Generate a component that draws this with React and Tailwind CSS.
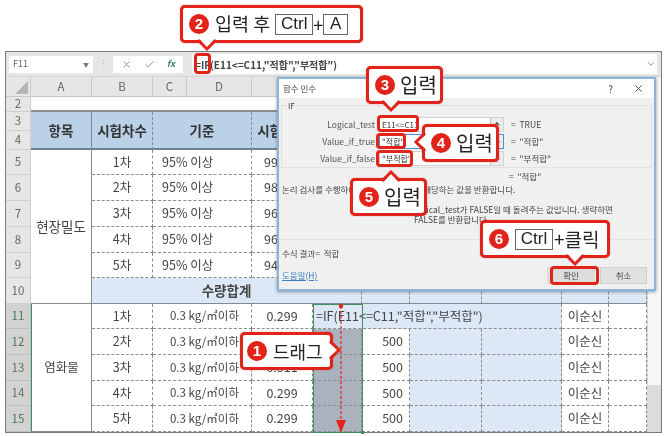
import React from 'react';
import { X, Check, ChevronDown, ArrowUp } from 'lucide-react';

const krFont = "font-['Noto_Sans_CJK_KR','Noto_Sans',sans-serif]";
const dash = 'border-r border-b border-dashed border-[#8c8c8c]';
const cell = `flex items-center justify-center text-[12.5px] text-[#444] ${dash}`;
const hdrCell = 'flex items-center justify-center bg-[#bad1e8] text-[13.5px] font-bold text-[#333] row-span-2 border-b-2 border-b-[#6f7f8c] [border-bottom-style:solid] border-r border-r-[#7d8b96] border-dashed';
const rowHdr = 'flex items-center justify-center text-[11.5px] text-[#666] bg-[#e6e6e6] border-b border-r border-[#cfcfcf]';
const rowHdrOn = 'flex items-center justify-center text-[11.5px] text-[#4f7460] bg-[#d2d2d2] border-b border-r border-[#bdbdbd]';
const colHdr = 'flex items-center justify-center text-[11.5px] text-[#666] bg-[#e6e6e6] border-r border-b border-[#c9c9c9]';
const blue = 'bg-[#dce8f5]';

const density = ['99.5%', '98.2%', '96.4%', '96.1%', '94.8%'];
const chloride = ['0.299', '0.299', '0.311', '0.299', '0.299'];

const Badge = ({ n }) => (
  <span className="w-[20px] h-[20px] rounded-full bg-[#e2231a] text-white text-[15px] font-bold flex items-center justify-center font-['Liberation_Sans',sans-serif] shrink-0">
    {n}
  </span>
);

const Key = ({ children, className }) => (
  <span className={`h-[21px] border border-[#666] flex items-center justify-center text-[17px] text-[#222] font-['Liberation_Sans',sans-serif] ${className}`}>
    {children}
  </span>
);

const Callout = ({ className, tail, children }) => (
  <div className={`absolute box-border border-[3px] border-[#e2231a] rounded-[5px] bg-white flex items-center text-[#222] shadow-[0_0_1px_#e2231a] ${className}`}>
    {children}
    {tail}
  </div>
);

const TailDown = ({ className }) => (
  <svg className={`absolute top-full overflow-visible ${className}`} width="18" height="11" viewBox="0 0 18 11">
    <polygon points="0,-3 9,8 18,-3" fill="white" />
    <polyline points="0,0 9,9 18,0" fill="none" stroke="#e2231a" strokeWidth="3" />
  </svg>
);

const TailUp = ({ className }) => (
  <svg className={`absolute bottom-full overflow-visible ${className}`} width="18" height="11" viewBox="0 0 18 11">
    <polygon points="0,14 9,3 18,14" fill="white" />
    <polyline points="0,11 9,2 18,11" fill="none" stroke="#e2231a" strokeWidth="3" />
  </svg>
);

const TailSide = ({ className, left }) => (
  <svg className={`absolute overflow-visible ${className}`} width="11" height="18" viewBox="0 0 11 18">
    {left ? (
      <>
        <polygon points="14,0 3,9 14,18" fill="white" />
        <polyline points="11,0 2,9 11,18" fill="none" stroke="#e2231a" strokeWidth="3" />
      </>
    ) : (
      <>
        <polygon points="-3,0 8,9 -3,18" fill="white" />
        <polyline points="0,0 9,9 0,18" fill="none" stroke="#e2231a" strokeWidth="3" />
      </>
    )}
  </svg>
);

const Mark = ({ className }) => (
  <div className={`absolute box-border border-[3px] border-[#e2231a] rounded-[4px] ${className}`} />
);

const FormulaBar = () => (
  <div className="h-[25px] bg-[#e6e6e6] flex items-center border-b border-[#d5d5d5] pl-[3px] pr-[4px]">
    <div className="w-[84px] h-[17px] bg-white flex items-center justify-between px-[4px] text-[9px] text-[#666]">
      <span>F11</span>
      <span className="text-[6px] text-[#777]">▼</span>
    </div>
    <div className="w-[20px] text-center text-[9px] text-[#bbb]">⋮</div>
    <div className="w-[70px] h-[17px] bg-white flex items-center justify-around px-[2px]">
      <X size={11} className="text-[#888]" />
      <Check size={11} className="text-[#888]" />
      <span className="text-[9px] italic font-bold text-[#3f8f5f]">fx</span>
    </div>
    <div className="w-[9px]" />
    <div className="flex-1 h-[20px] bg-white flex items-center justify-between pl-[3px] pr-[1px] text-[10px] font-bold text-[#444]">
      <span>=IF(E11&lt;=C11,"적합","부적합")</span>
      <ChevronDown size={10} className="text-[#777]" />
    </div>
  </div>
);

const Sheet = () => (
  <div className="grid grid-cols-[25px_61px_61px_34px_65px_61px_49px_48px_72px_80px_47px_38px] grid-rows-[20px_15px_19px_19px_25px_26px_26px_26px_25px_26px_25px_26px_26px_25px_26px]">
    <div className={`${colHdr} relative`}>
      <div className="absolute right-[2px] bottom-[2px] w-0 h-0 border-l-[13px] border-l-transparent border-b-[13px] border-b-[#b5b5b5]" />
    </div>
    {['A', 'B', 'C', 'D', 'E', 'F', 'G', 'H', 'I', 'J', 'K'].map((c) => (
      <div key={c} className={colHdr}>{c}</div>
    ))}

    <div className={rowHdr}>2</div>
    <div className="col-span-11 bg-white border-b-2 border-[#8c8c8c]" />

    <div className={rowHdr}>3</div>
    <div className={`${hdrCell} [border-right-style:solid]`}>항목</div>
    <div className={hdrCell}>시험차수</div>
    <div className={`${hdrCell} col-span-2`}>기준</div>
    <div className={hdrCell}>시험결과</div>
    {[0, 1, 2, 3, 4, 5].map((k) => (
      <div key={k} className={hdrCell} />
    ))}
    <div className={rowHdr}>4</div>

    {density.map((v, i) => (
      <React.Fragment key={i}>
        <div className={rowHdr}>{i + 5}</div>
        {i === 0 && (
          <div className="row-span-6 flex items-center justify-center text-[13.5px] text-[#444] bg-white border-r border-r-[#7d8b96] border-b border-b-[#8c8c8c]">
            현장밀도
          </div>
        )}
        <div className={cell}>{i + 1}차</div>
        <div className={`${cell} col-span-2 justify-start pl-[9px]`}>95% 이상</div>
        <div className={cell}>{v}</div>
        <div className={cell} />
        <div className={cell} />
        <div className={cell} />
        <div className={cell} />
        <div className={cell} />
        <div className={cell} />
      </React.Fragment>
    ))}

    <div className={rowHdr}>10</div>
    <div className={`${cell} col-span-5 ${blue} font-bold text-[13.5px] border-b-[#7d8b96] [border-bottom-style:solid]`}>수량합계</div>
    {[0, 1, 2, 3, 4].map((k) => (
      <div key={k} className={`${dash} ${blue} border-b-[#7d8b96] [border-bottom-style:solid]`} />
    ))}

    {chloride.map((v, i) => (
      <React.Fragment key={i}>
        <div className={rowHdrOn}>{i + 11}</div>
        {i === 0 && (
          <div className="row-span-5 flex items-center justify-center text-[12.5px] text-[#444] bg-white border-r border-[#7d8b96] border-l border-l-[#3f8f5f] border-b border-b-[#8c8c8c]">
            염화물
          </div>
        )}
        <div className={cell}>{i + 1}차</div>
        <div className={`${cell} col-span-2`}>
          <span className="text-[11.5px] pl-[5px]">0.3 kg/㎥이하</span>
        </div>
        <div className={cell}>{v}</div>
        {i === 0 ? (
          <div className={`${cell} col-span-4 ${blue} justify-start pl-[3px] text-[11.5px] whitespace-nowrap`}>
            =IF(E11&lt;=C11,"적합","부적합")
          </div>
        ) : (
          <>
            <div className={`${cell} bg-[#a9b2bd]`} />
            <div className={`${cell} justify-end pr-[6px]`}>500</div>
            <div className={`${dash} ${blue}`} />
            <div className={`${dash} ${blue}`} />
          </>
        )}
        <div className={cell}>이순신</div>
        <div className={dash} />
      </React.Fragment>
    ))}
  </div>
);

const ArgRow = ({ label, value, result, active }) => (
  <div className="flex items-center h-[17px]">
    <div className="w-[97px] text-right pr-[4px] text-[8.5px] text-[#555]">{label}</div>
    <div className={`w-[125px] h-[15px] bg-white flex items-center justify-between border ${active ? 'border-[#4a90d9]' : 'border-[#d2d2d2]'}`}>
      <span className="pl-[2px] text-[8px] text-[#333]">{value}</span>
      <span className="w-[13px] h-full bg-[#ececec] border-l border-[#bbb] flex items-center justify-center">
        <ArrowUp size={8} strokeWidth={3} className="text-[#333]" />
      </span>
    </div>
    <div className="ml-[7px] text-[8.5px] text-[#444] whitespace-nowrap">=&nbsp;&nbsp;{result}</div>
  </div>
);

const Dialog = () => (
  <div className="absolute left-[277px] top-[77px] w-[379px] h-[214px] box-border bg-[#f0f0f0] border-2 border-[#8db3d6] shadow-[0_1px_3px_rgba(60,90,120,0.6)] flex flex-col text-[8.5px] text-[#444]">
    <div className="h-[19px] bg-white flex items-center justify-between px-[4px] shrink-0">
      <span>함수 인수</span>
      <div className="flex items-center gap-[20px] pr-[6px]">
        <span className="text-[10px]">?</span>
        <X size={11} className="text-[#444]" />
      </div>
    </div>
    <div className="mx-[2px] mt-[7px] h-[63px] border border-[#e0e0e0] relative pt-[10px] flex flex-col">
      <span className="absolute -top-[6px] left-[5px] bg-[#f0f0f0] px-[1px] text-[8px]">IF</span>
      <ArgRow label="Logical_test" value="E11<=C11" result="TRUE" />
      <ArgRow label="Value_if_true" value={'"적합"'} result={'"적합"'} active />
      <ArgRow label="Value_if_false" value={'"부적합"'} result={'"부적합"'} />
    </div>
    <div className="pl-[230px] mt-[2px] h-[12px] leading-[12px] whitespace-nowrap">=&nbsp;&nbsp;"적합"</div>
    <div className="px-[3px] mt-[1px] whitespace-nowrap">논리 검사를 수행하여 TRUE나 FALSE에 해당하는 값을 반환합니다.</div>
    <div className="pl-[135px] mt-[8px] leading-[10px]">
      <div className="whitespace-nowrap">logical_test가 FALSE일 때 돌려주는 값입니다. 생략하면</div>
      <div className="whitespace-nowrap">FALSE를 반환합니다.</div>
    </div>
    <div className="mt-auto border-t border-[#e2e2e2] px-[3px] pt-[7px] pb-[5px] flex flex-col">
      <span className="h-[15px]">수식 결과=&nbsp;&nbsp;적합</span>
      <div className="flex items-center justify-between mt-[5px] pr-[4px]">
        <span className="text-[#3f7fc0] underline">도움말(H)</span>
        <div className="flex gap-[5px]">
          <span className="w-[48px] h-[17px] bg-[#dddddd] flex items-center justify-center">확인</span>
          <span className="w-[47px] h-[17px] bg-[#e1e1e1] border border-[#cfcfcf] flex items-center justify-center">취소</span>
        </div>
      </div>
    </div>
  </div>
);

export default function App() {
  return (
    <div className={`relative w-[668px] h-[436px] bg-white overflow-hidden pt-[51px] pl-[5px] blur-[0.45px] ${krFont}`}>
      <div className="w-[657px] h-[382px] box-border border border-[#7a7a7a] bg-white flex flex-col">
        <FormulaBar />
        <div className="flex">
          <Sheet />
          <div className="w-[14px] flex flex-col bg-[#f5f5f5] border-l border-[#d5d5d5]">
            <div className="flex-1 bg-[#f7f7f7]" />
            <div className="h-[47px] bg-[#dcdcdc]" />
          </div>
        </div>
      </div>

      {/* selected range F11:F15 and the drag arrow */}
      <div className="absolute left-[313px] top-[304px] w-[50px] h-[129px] box-border border border-[#3f8f5f]" />
      <div className="absolute left-[361px] top-[431px] w-[3px] h-[3px] bg-[#3f8f5f]" />
      <svg className="absolute left-[331px] top-[300px]" width="20" height="136" viewBox="0 0 20 136">
        <circle cx="10" cy="6" r="2.2" fill="#e2231a" />
        <line x1="10" y1="6" x2="10" y2="122" stroke="#e2231a" strokeWidth="1.2" strokeDasharray="3 2" />
        <polygon points="5,120 15,120 10,133" fill="#e2231a" />
      </svg>

      <Dialog />

      <Mark className="left-[194px] top-[53px] w-[17px] h-[21px]" />
      <Mark className="left-[377px] top-[115px] w-[42px] h-[17px]" />
      <Mark className="left-[376px] top-[133px] w-[30px] h-[16px]" />
      <Mark className="left-[376px] top-[150px] w-[37px] h-[17px]" />
      <Mark className="left-[550px] top-[266px] w-[49px] h-[19px]" />

      <Callout className="left-[180px] top-[5px] w-[183px] h-[38px] pl-[6px]" tail={<TailDown className="left-[15px]" />}>
        <Badge n="2" />
        <span className="ml-[6px] text-[18.5px] whitespace-nowrap">입력 후</span>
        <Key className="ml-[5px] w-[38px]">Ctrl</Key>
        <span className="text-[18px] leading-none">+</span>
        <Key className="w-[25px]">A</Key>
      </Callout>

      <Callout className="left-[366px] top-[66px] w-[77px] h-[38px] pl-[6px]" tail={<TailDown className="left-[13px]" />}>
        <Badge n="3" />
        <span className="ml-[5px] text-[20px] whitespace-nowrap">입력</span>
      </Callout>

      <Callout className="left-[422px] top-[124px] w-[77px] h-[38px] pl-[6px]" tail={<TailSide left className="right-full top-[6px]" />}>
        <Badge n="4" />
        <span className="ml-[5px] text-[20px] whitespace-nowrap">입력</span>
      </Callout>

      <Callout className="left-[350px] top-[178px] w-[77px] h-[38px] pl-[6px]" tail={<TailUp className="left-[29px]" />}>
        <Badge n="5" />
        <span className="ml-[5px] text-[20px] whitespace-nowrap">입력</span>
      </Callout>

      <Callout className="left-[480px] top-[220px] w-[130px] h-[38px] pl-[6px]" tail={<TailDown className="left-[83px]" />}>
        <Badge n="6" />
        <Key className="ml-[6px] w-[38px]">Ctrl</Key>
        <span className="ml-[1px] text-[19px] whitespace-nowrap">+클릭</span>
      </Callout>

      <Callout className="left-[240px] top-[332px] w-[93px] h-[38px] pl-[4px]" tail={<TailSide className="left-full top-[6px]" />}>
        <Badge n="1" />
        <span className="ml-[6px] text-[18px] whitespace-nowrap">드래그</span>
      </Callout>
    </div>
  );
}
